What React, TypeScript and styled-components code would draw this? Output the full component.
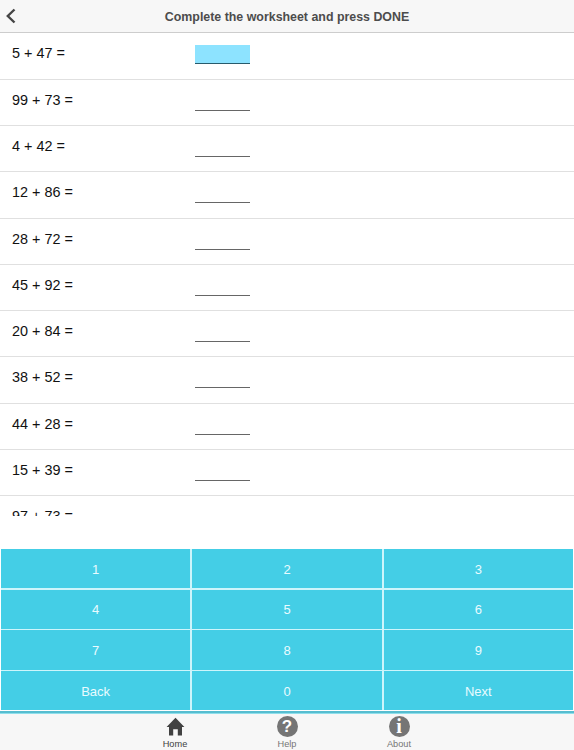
import React from "react";
import styled, { createGlobalStyle } from "styled-components";

const GlobalStyle = createGlobalStyle`
  *, *::before, *::after { box-sizing: border-box; }
  body {
    margin: 0;
    background: #fff;
    font-family: "Liberation Sans", Arial, sans-serif;
  }
`;

const Screen = styled.div`
  width: 574px;
  height: 750px;
  display: flex;
  flex-direction: column;
  overflow: hidden;
  background: #fff;
`;

const Header = styled.header`
  flex: none;
  height: 33.4px;
  display: grid;
  grid-template-columns: 40px 1fr 40px;
  align-items: center;
  background: #f7f7f7;
  border-bottom: 1px solid #cdcdcd;
`;

const BackButton = styled.button`
  display: flex;
  padding: 0 0 0 5px;
  border: 0;
  background: none;
`;

const Title = styled.h1`
  margin: 0;
  padding-top: 1px;
  text-align: center;
  white-space: nowrap;
  font-size: 12.4px;
  line-height: 16px;
  font-weight: 700;
  color: #4c4c4c;
`;

const Worksheet = styled.main`
  flex: none;
  height: 482.6px;
  overflow: hidden;
`;

const Problem = styled.div`
  height: 46.3px;
  display: grid;
  grid-template-columns: 183.3px 55px;
  padding: 12px 0 0 12px;
  border-bottom: 1px solid #e0e0e0;
`;

const Question = styled.span`
  font-size: 14.4px;
  line-height: 17px;
  color: #111;
  white-space: nowrap;
`;

const Answer = styled.span<{ $active: boolean }>`
  height: 19px;
  border-bottom: 1px solid ${(p) => (p.$active ? "#285a6b" : "#666")};
  background: ${(p) => (p.$active ? "#8de3ff" : "transparent")};
`;

const Keypad = styled.section`
  flex: none;
  height: 161.4px;
  margin: 33px 1px 0;
  display: grid;
  grid-template-columns: repeat(3, 1fr);
  grid-template-rows: repeat(4, 1fr);
  column-gap: 2px;
  row-gap: 1.2px;
  background: #cdf5fb;
`;

const Key = styled.button`
  padding: 2px 0 0;
  border: 0;
  background: #44cee6;
  color: #e9fbff;
  font-family: inherit;
  font-size: 13px;
  line-height: 16px;
`;

const Divider = styled.div`
  flex: none;
  height: 3px;
  margin-top: 0.6px;
  background: #57bdd0;
  border-bottom: 1px solid #8fdfeb;
`;

const TabBar = styled.nav`
  flex: 1;
  display: flex;
  justify-content: center;
  background: #f7f7f7;
`;

const Tab = styled.div<{ $active: boolean }>`
  width: 112px;
  display: flex;
  flex-direction: column;
  align-items: center;
  padding-top: 2px;
  color: ${(p) => (p.$active ? "#414141" : "#757575")};
`;

const TabLabel = styled.span`
  margin-top: 1px;
  font-size: 9.2px;
  line-height: 12px;
`;

const RoundIcon = styled.span<{ $serif?: boolean }>`
  width: 21px;
  height: 21px;
  border-radius: 50%;
  display: flex;
  align-items: center;
  justify-content: center;
  background: #757575;
  color: #fff;
  font-family: ${(p) =>
    p.$serif ? '"Liberation Serif", serif' : '"Liberation Sans", sans-serif'};
  font-size: ${(p) => (p.$serif ? 20 : 17)}px;
  font-weight: 700;
  line-height: 21px;
`;

const ChevronIcon = () => (
  <svg width="12" height="16" viewBox="0 0 12 16" fill="none">
    <path d="M9.5 1.5 2.8 8l6.7 6.5" stroke="#454545" strokeWidth="2.4" />
  </svg>
);

const HomeIcon = () => (
  <svg width="21" height="21" viewBox="0 0 21 21" fill="#414141">
    <path d="M10.5 1.7 19.4 11H17v8.6h-4.2v-6.3H8.2v6.3H4V11H1.6Z" />
  </svg>
);

const problems = [
  "5 + 47 =",
  "99 + 73 =",
  "4 + 42 =",
  "12 + 86 =",
  "28 + 72 =",
  "45 + 92 =",
  "20 + 84 =",
  "38 + 52 =",
  "44 + 28 =",
  "15 + 39 =",
  "97 + 73 =",
];

const keys = ["1", "2", "3", "4", "5", "6", "7", "8", "9", "Back", "0", "Next"];

const tabs = [
  { label: "Home", icon: <HomeIcon /> },
  { label: "Help", icon: <RoundIcon>?</RoundIcon> },
  { label: "About", icon: <RoundIcon $serif>i</RoundIcon> },
];

export default function App() {
  return (
    <>
      <GlobalStyle />
      <Screen>
        <Header>
          <BackButton aria-label="Go back">
            <ChevronIcon />
          </BackButton>
          <Title>Complete the worksheet and press DONE</Title>
        </Header>
        <Worksheet>
          {problems.map((problem, index) => (
            <Problem key={problem}>
              <Question>{problem}</Question>
              <Answer $active={index === 0} />
            </Problem>
          ))}
        </Worksheet>
        <Keypad>
          {keys.map((key) => (
            <Key key={key}>{key}</Key>
          ))}
        </Keypad>
        <Divider />
        <TabBar>
          {tabs.map(({ label, icon }) => (
            <Tab key={label} $active={label === "Home"}>
              {icon}
              <TabLabel>{label}</TabLabel>
            </Tab>
          ))}
        </TabBar>
      </Screen>
    </>
  );
}
